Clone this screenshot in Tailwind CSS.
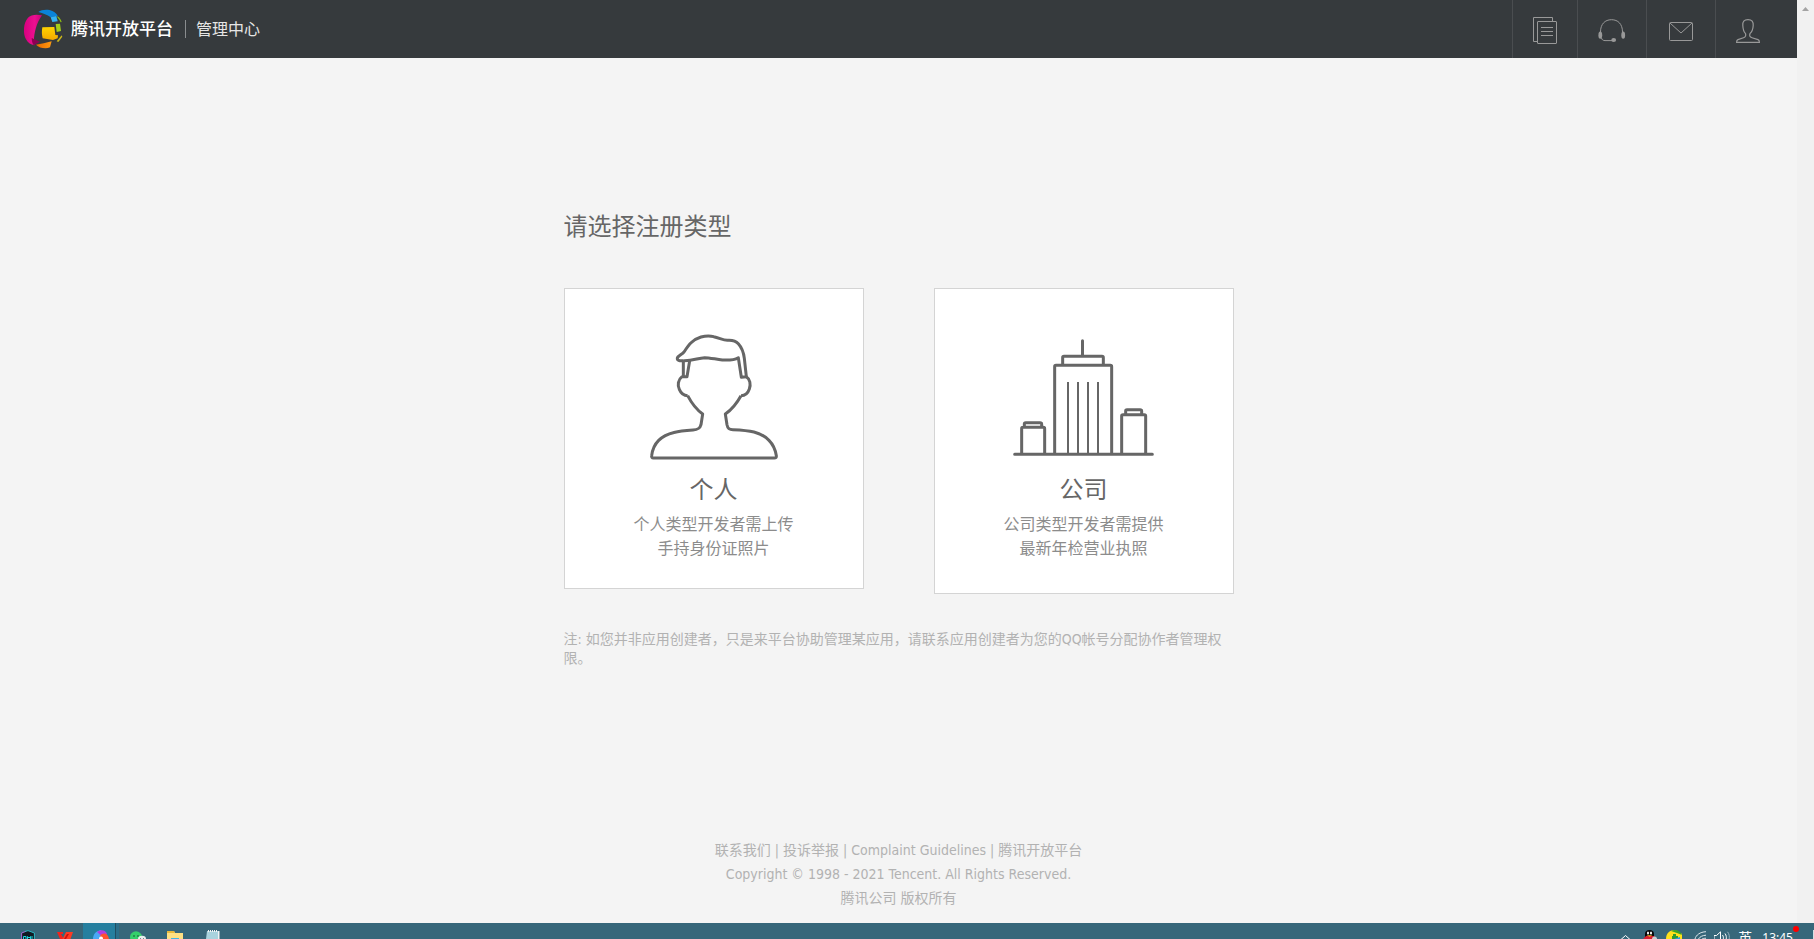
<!DOCTYPE html>
<html lang="zh-CN">
<head>
<meta charset="utf-8">
<title>腾讯开放平台 管理中心</title>
<script src="https://cdn.jsdelivr.net/npm/@tailwindcss/browser@4"></script>
</head>
<body class="flex h-screen flex-col overflow-hidden bg-[#f4f4f4] font-['DejaVu_Sans_Condensed','Noto_Sans_CJK_SC',sans-serif] text-[#666]">
<div class="flex min-h-0 flex-1">
  <div class="flex min-w-0 flex-1 flex-col">
    <header class="flex h-[58px] shrink-0 items-center justify-between bg-[#363a3d] text-white">
      <div class="flex items-center pl-6">
        <a href="#" class="flex items-center gap-2">
          <svg class="h-10 w-[39px]" viewBox="42 25 117 120" aria-hidden="true">
            <defs>
              <linearGradient id="pink" x1="0" y1="0" x2="1" y2="0"><stop offset="0" stop-color="#d8007f"/><stop offset=".6" stop-color="#ec1091"/><stop offset="1" stop-color="#c8007a"/></linearGradient>
              <linearGradient id="gold" x1="0" y1="0" x2="0" y2="1"><stop offset="0" stop-color="#ffd400"/><stop offset="1" stop-color="#f4a900"/></linearGradient>
              <linearGradient id="orange" x1="0" y1="0" x2="1" y2="0"><stop offset="0" stop-color="#e86a00"/><stop offset="1" stop-color="#ff9a10"/></linearGradient>
            </defs>
            <path fill="url(#pink)" d="M96 44C80 40 62 42 54 51C40 67 38 98 48 116C54 127 63 132 73 134C69 110 76 72 96 44Z"/>
            <path fill="#8c0052" d="M65 112L90 123L71 134C67 128 65 120 65 112Z"/>
            <path fill="#0a84d8" d="M85 34C95 26 115 25 127 31C135 34 141 40 143 46L122 50C112 42 99 38 85 34Z"/>
            <path fill="#35b4f2" d="M122 50L139 46L143 62L127 64Z"/>
            <path fill="#8fbf12" d="M142 46C149 51 153 57 155 64L152 65C149 59 146 54 142 50Z"/>
            <path fill="#a4cf18" d="M137 70L150 69L153 91L140 94Z"/>
            <path fill="url(#gold)" d="M97 80L133 79L136 103L144 104L143 113L129 118L98 113C95 101 95 91 97 80Z"/>
            <path fill="#c9b51a" d="M155 104L157 108L145 124L140 122Z"/>
            <path fill="url(#orange)" d="M78 132C93 130 109 126 125 122L120 140C107 146 88 142 78 132Z"/>
          </svg>
          <span class="text-[17px] leading-6 font-medium">腾讯开放平台</span>
        </a>
        <span class="ml-3 h-[18px] w-px bg-[#8a8d8f]"></span>
        <a href="#" class="ml-[10px] pt-[2px] text-base leading-6 text-[#e6e6e6]">管理中心</a>
      </div>
      <nav class="flex h-full text-[#999]">
        <a href="#" aria-label="文档" class="flex w-[65px] items-center border-l border-[#4a4d50] pt-1 pl-5">
          <svg class="h-7 w-[25px]" viewBox="0 0 25 28" fill="none" stroke="currentColor"><path d="M4.500 24.500H.5V.5H19.500V4.500"/><rect x="4.500" y="4.500" width="19" height="22" rx=".5"/><path d="M8 10.500H20M8 14.500H20M8 18.500H20"/></svg>
        </a>
        <a href="#" aria-label="客服" class="flex w-[69px] items-center border-l border-[#4a4d50] pt-1 pl-5">
          <svg class="h-6 w-7" viewBox="0 0 28 24" fill="none" stroke="currentColor"><path d="M2.500 13C2.500 5 7 .7 13.500 .7S24.500 5 24.500 13"/><path d="M3.500 19C4 20.800 5 21.600 7 21.600H15"/><ellipse cx="2.300" cy="16.200" rx="1.900" ry="3.600" fill="currentColor" stroke="none"/><ellipse cx="25.200" cy="16.200" rx="1.900" ry="3.600" fill="currentColor" stroke="none"/><ellipse cx="15.700" cy="21" rx="2.400" ry="2" fill="currentColor" stroke="none"/></svg>
        </a>
        <a href="#" aria-label="消息" class="flex w-[69px] items-center border-l border-[#4a4d50] pt-[6px] pl-[22px]">
          <svg class="h-5 w-[25px]" viewBox="0 0 25 20" fill="none" stroke="currentColor"><rect x=".5" y=".5" width="23" height="18" rx="1"/><path d="M1 1L12 11L23 1"/></svg>
        </a>
        <a href="#" aria-label="帐号" class="flex w-[82px] items-center border-l border-[#4a4d50] pt-1 pl-5">
          <svg class="h-6 w-6" viewBox="0 0 24 24" fill="none" stroke="currentColor" stroke-width="1.200"><path d="M12 .6C8 .6 6.500 3 6.800 6.500C7 10 7.200 12.500 9.500 14.500C10.300 17 9.600 18 7.500 18.700L2 20.600C.8 21 .6 22 .6 23.300H23.400C23.400 22 23.200 21 22 20.600L16 18.700C13.800 18 13.200 17 14 14.500C16.500 12.500 17 10 17.200 6.500C17.400 3 16 .6 12 .6Z"/></svg>
        </a>
      </nav>
    </header>

    <main class="mx-auto w-[670px] pt-[151px]">
      <h1 class="text-2xl leading-9">请选择注册类型</h1>
      <div class="mt-[43px] flex items-start justify-between">
        <a href="#" class="flex w-[300px] flex-col items-center border border-[#d4d4d4] bg-white pt-9 pb-[27px] text-center">
          <svg class="h-[140px] w-[150px]" viewBox="-2 -1 450 420" fill="none" stroke="#666" stroke-width="9" stroke-linejoin="round" aria-hidden="true">
            <path d="M131 106C118 107 112 105 113 98C116 91 126 88 133 80C146 60 157 43 184 35C198 31 209 30 222 34C240 38 250 45 263 45C276 44 286 44 296 55C308 68 312 82 314 99L320 154L305 156L296 97C286 103 265 105 248 104C225 101 208 97 195 97C173 99 158 107 131 106"/>
            <path d="M131 106V153M150 106L142 154H127C115 163 113 180 119 192C124 204 132 211 144 211"/>
            <path d="M144 211C155 232 169 252 189 266L184 298C181 310 174 313 160 314C121 317 82 320 57 345C44 358 38 374 36 391Q35 398 41 398H404Q411 398 410 391C407 372 400 357 388 345C363 319 329 315 280 313C268 313 264 309 262 298L257 266C277 252 293 231 304 211"/>
            <path d="M304 211C316 211 325 203 329 191C334 177 331 161 320 154"/>
          </svg>
          <h2 class="mt-[9px] text-2xl leading-8">个人</h2>
          <p class="mt-[7px] text-base leading-6 text-[#8c8c8c]">个人类型开发者需上传<br>手持身份证照片</p>
        </a>
        <a href="#" class="flex w-[300px] flex-col items-center border border-[#d4d4d4] bg-white pt-9 pb-8 text-center">
          <svg class="h-[140px] w-[150px]" viewBox="267 165 450 420" fill="none" stroke="#666" stroke-width="9" stroke-linejoin="round" stroke-linecap="round" aria-hidden="true">
            <path d="M284 553H697M404 550V290Q404 286 408 286H571Q575 286 575 290V550M428 284V263Q428 259 432 259H546Q550 259 550 263V284M487.500 212V257"/>
            <path d="M305 550V476Q305 472 309 472H370Q374 472 374 476V550M313 470V462Q313 458 317 458H360Q365 458 365 462V470M605 550V438Q605 434 609 434H673Q677 434 677 438V550M617 432V423Q617 419 621 419H660Q665 419 665 423V432"/>
            <path stroke-width="6" stroke-linecap="butt" d="M444 336V550M474 336V550M504 336V550M534 336V550"/>
          </svg>
          <h2 class="mt-[9px] text-2xl leading-8">公司</h2>
          <p class="mt-[7px] text-base leading-6 text-[#8c8c8c]">公司类型开发者需提供<br>最新年检营业执照</p>
        </a>
      </div>
      <p class="mt-9 text-sm leading-[19px] text-[#b2b2b2]">注: 如您并非应用创建者，只是来平台协助管理某应用，请联系应用创建者为您的QQ帐号分配协作者管理权限。</p>
    </main>

    <footer class="mt-auto pb-[13px] text-center text-sm leading-6 text-[#b2b2b2]">
      <p><a href="#">联系我们</a> | <a href="#">投诉举报</a> | <a href="#">Complaint Guidelines</a> | <a href="#">腾讯开放平台</a></p>
      <p>Copyright © 1998 - 2021 Tencent. All Rights Reserved.</p>
      <p>腾讯公司 版权所有</p>
    </footer>
  </div>
  <div class="flex w-[17px] shrink-0 justify-center bg-[#f1f1f1] pt-[7px]">
    <svg class="h-1 w-[7px]" viewBox="0 0 7 4" fill="#a3a3a3" aria-hidden="true"><path d="M0 4L3.500 0L7 4Z"/></svg>
  </div>
</div>

<div class="flex h-4 shrink-0 justify-between overflow-hidden bg-[#37677a] font-['Noto_Sans','Noto_Sans_CJK_SC',sans-serif]">
  <div class="flex h-full pl-[9px]">
    <span class="flex w-[37px] items-start justify-center pt-[7px]"><svg class="h-[9px] w-[14px]" viewBox="0 0 14 9"><path d="M.6 9V3L7 .5L13.400 3V9" fill="#111a22"/><path d="M.6 9V3L5 1.300" fill="none" stroke="#a66ad0"/><path d="M4 1.500L7 .6L13.400 3V9" fill="none" stroke="#2bb8c4"/><path d="M2.500 9V6.500H5V9M6.500 9V6.500L8 8L9.500 6.500V9M11 6V9" fill="none" stroke="#19d3dc"/></svg></span>
    <span class="flex w-[37px] items-start justify-center pt-[9px]"><svg class="h-[7px] w-4" viewBox="0 0 16 7"><path d="M0 0H6V2H4L7 7H3Z" fill="#f1231c"/><path d="M9 0H16L13.500 7H5.500Z" fill="#ff3b22"/><path d="M10 2L7 7H9L12 2Z" fill="#c8140f"/></svg></span>
    <span class="flex w-8 items-start justify-center bg-[#257f9f] pt-[7px] pl-1"><svg class="h-[9px] w-4" viewBox="0 0 16 9"><path d="M0 9C0 4 3 1 8 0L10 9Z" fill="#4aa8f5"/><path d="M4 2C8-1 13 0 14 4L10 8C8 5 6 4 4 2Z" fill="#b13ee0"/><path d="M7 6C10 2 15 3 16 9H8Z" fill="#ff5030"/><circle cx="8" cy="8.500" r="2" fill="#fff"/></svg></span>
    <span class="w-1 border-l border-[#1f4e62] bg-[#2a6f8a]"></span>
    <span class="flex w-[38px] items-start justify-center pt-2"><svg class="h-2 w-4" viewBox="0 0 16 8"><ellipse cx="6" cy="6" rx="6" ry="5.700" fill="#35cf6b"/><circle cx="4" cy="5" r=".8" fill="#124d2b"/><circle cx="8" cy="5" r=".8" fill="#124d2b"/><ellipse cx="12" cy="8" rx="4" ry="3.200" fill="#e8efed"/><path d="M10.500 7V8M13.500 7V8" stroke="#789"/></svg></span>
    <span class="flex w-[36px] items-start justify-center pt-2"><svg class="h-2 w-4" viewBox="0 0 16 8"><path d="M0 0H7L8 2H16V8H0Z" fill="#ffe083"/><path d="M0 0H7L8 2H0Z" fill="#e9b93c"/><path d="M4 7H12V8H4Z" fill="#40b4e5"/></svg></span>
    <span class="flex w-[39px] items-start justify-center pt-[7px]"><svg class="h-[9px] w-[14px]" viewBox="0 0 14 9"><path d="M1 1H13V9H0Z" fill="#a9d3de"/><path d="M12 1H13.500V9H12Z" fill="#eef3f4"/><path d="M2.500 0V2M4.500 0V2M6.500 0V2M8.500 0V2M10.500 0V2" stroke="#f5f5f5"/></svg></span>
  </div>
  <div class="flex h-full items-start text-white">
    <svg class="mt-3 mr-3 h-1 w-[9px]" viewBox="0 0 9 4" fill="none" stroke="#fff"><path d="M0 4.500L4.500 .5L9 4.500"/></svg>
    <svg class="mt-[7px] mr-2 h-[9px] w-4" viewBox="0 0 16 9"><path d="M3 9V4C3 1 5 0 7.500 0S12 1 12 4V9Z" fill="#080808"/><path d="M1 9L4 6H12L15 9Z" fill="#d82030"/><ellipse cx="6" cy="3" rx="1" ry="1.500" fill="#fff"/><ellipse cx="9" cy="3" rx="1" ry="1.500" fill="#fff"/><path d="M4.500 5.200H10.500L7.500 6.700Z" fill="#f7b21b"/><circle cx="12.500" cy="9" r="2.500" fill="#c9d0d2"/></svg>
    <svg class="mt-[7px] mr-3 h-[9px] w-4" viewBox="0 0 16 9"><path d="M0 9C0 3 4 0 9 0L16 4V9Z" fill="#ffe11a"/><path d="M5 1C9-1 14 0 16 5L11 3Z" fill="#3ba22b"/><path d="M7 4H10V6H12V9H6V6H7Z" fill="#2e9a32"/><path d="M8 9L14 7V9Z" fill="#229fe8"/></svg>
    <svg class="mt-2 mr-2 h-2 w-3" viewBox="0 0 12 8" fill="none" stroke="#dfe9ed"><path d="M1 8C2 4 6 1 12 .7M4.500 8C6 5.500 8.500 4.500 12 4.200M8 8C9 7.500 10 7.300 12 7.200"/></svg>
    <svg class="mt-2 mr-2 h-2 w-4" viewBox="0 0 16 8" fill="none" stroke="#fff"><path d="M0 8V4.500H2.500L6.500 .8V8M8.500 4C9.500 5.500 9.500 7 9.300 8M11 2.500C12.500 4.500 12.500 6.500 12.200 8"/><path stroke="#9ab5c0" d="M13.500 .8C15.500 3 15.500 6 15.200 8"/></svg>
    <span class="mt-[7px] mr-[10px] text-sm leading-4">英</span>
    <time class="mt-[7px] text-xs leading-4">13:45</time>
    <span class="mt-[3px] mr-[14px] size-[6px] rounded-full bg-[#f00]"></span>
    <span class="mt-[7px] h-[9px] w-px bg-[#d5e0e4]"></span>
  </div>
</div>
</body>
</html>
